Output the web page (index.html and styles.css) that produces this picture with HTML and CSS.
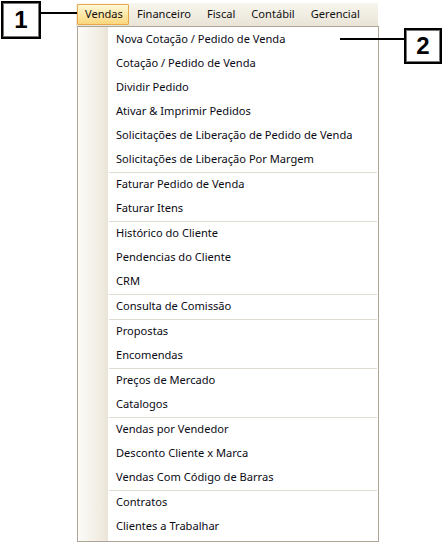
FILE: index.html
```html
<!DOCTYPE html>
<html>
<head>
<meta charset="utf-8">
<link rel="stylesheet" href="styles.css">
</head>
<body>
<div class="screen">
  <div class="app">
    <nav class="menubar">
      <span class="mb-item active">Vendas</span>
      <span class="mb-item">Financeiro</span>
      <span class="mb-item">Fiscal</span>
      <span class="mb-item">Contábil</span>
      <span class="mb-item">Gerencial</span>
    </nav>
    <ul class="dropdown">
      <li class="item">Nova Cotação / Pedido de Venda</li>
      <li class="item">Cotação / Pedido de Venda</li>
      <li class="item">Dividir Pedido</li>
      <li class="item">Ativar &amp; Imprimir Pedidos</li>
      <li class="item">Solicitações de Liberação de Pedido de Venda</li>
      <li class="item">Solicitações de Liberação Por Margem</li>
      <li class="sep"></li>
      <li class="item">Faturar Pedido de Venda</li>
      <li class="item">Faturar Itens</li>
      <li class="sep"></li>
      <li class="item">Histórico do Cliente</li>
      <li class="item">Pendencias do Cliente</li>
      <li class="item">CRM</li>
      <li class="sep"></li>
      <li class="item">Consulta de Comissão</li>
      <li class="sep"></li>
      <li class="item">Propostas</li>
      <li class="item">Encomendas</li>
      <li class="sep"></li>
      <li class="item">Preços de Mercado</li>
      <li class="item">Catalogos</li>
      <li class="sep"></li>
      <li class="item">Vendas por Vendedor</li>
      <li class="item">Desconto Cliente x Marca</li>
      <li class="item">Vendas Com Código de Barras</li>
      <li class="sep"></li>
      <li class="item">Contratos</li>
      <li class="item">Clientes a Trabalhar</li>
    </ul>
  </div>
  <div class="callout callout-1"><span class="num">1</span></div>
  <div class="line line-1"></div>
  <div class="callout callout-2"><span class="num">2</span></div>
  <div class="line line-2"></div>
</div>
</body>
</html>
```
FILE: styles.css
```css
html, body {
  margin: 0;
  padding: 0;
  background: #ffffff;
}
.screen {
  position: relative;
  width: 445px;
  height: 542px;
  overflow: hidden;
  font-family: "Noto Sans", "DejaVu Sans", sans-serif;
  font-size: 11.1px;
  color: #0a0a14;
}
.app {
  padding-top: 3px;
  padding-left: 76px;
  width: 302px;
}
.menubar {
  display: flex;
  align-items: center;
  height: 23px;
  background: linear-gradient(to bottom, #f7f5ee 0%, #efebe0 60%, #e8e3d5 100%);
  padding-left: 1px;
}
.mb-item {
  box-sizing: border-box;
  height: 21px;
  line-height: 18px;
  padding: 0 7px;
  border: 1px solid transparent;
  color: #111;
}
.mb-item.active {
  padding-right: 5px;
  border-color: #e6a84c;
  background: linear-gradient(to bottom, #fff8d8 0%, #fde8a8 50%, #fbd77e 100%);
  border-radius: 1px;
}
.dropdown {
  list-style: none;
  margin: 0 0 0 1px;
  padding: 1px 1px 2px 1px;
  width: 298px;
  border: 1px solid #aea596;
  background: linear-gradient(to right, #fcfbf8 0px, #f1ede3 22px, #e9e4d6 30px, #ffffff 30px, #ffffff 100%);
}
.item {
  height: 24px;
  line-height: 21px;
  padding-left: 37px;
  white-space: nowrap;
}
.sep {
  height: 1px;
  margin-left: 30px;
  margin-right: 0;
  background: #e0dcd2;
}
.callout {
  position: absolute;
  box-sizing: border-box;
  border: 2px solid #000;
  box-shadow: inset 0 0 0 1px #777;
  background: #fff;
  display: flex;
  align-items: center;
  justify-content: center;
}
.num {
  font-family: "Liberation Sans", Arial, sans-serif;
  font-weight: bold;
  font-size: 24px;
  color: #000;
}
.callout-1 {
  left: 1px;
  top: 1px;
  width: 40px;
  height: 38px;
}
.callout-2 {
  left: 404px;
  top: 28px;
  width: 38px;
  height: 36px;
}
.line {
  position: absolute;
  height: 2px;
  background: #000;
}
.line-1 {
  left: 41px;
  top: 12px;
  width: 36px;
}
.line-2 {
  left: 340px;
  top: 38px;
  width: 64px;
}
```
